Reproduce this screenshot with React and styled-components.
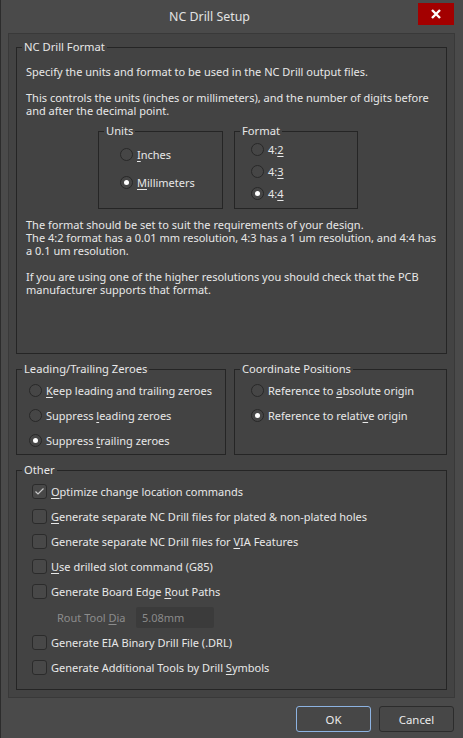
import React from 'react';
import styled, { createGlobalStyle } from 'styled-components';

const FONT = `"Noto Sans", "Open Sans", "DejaVu Sans", sans-serif`;

const GlobalStyle = createGlobalStyle`
  html, body {
    margin: 0;
    padding: 0;
    background: #4a4a4a;
  }
`;

const Window = styled.div`
  width: 463px;
  height: 738px;
  box-sizing: border-box;
  background: #4a4a4a;
  border-left: 1px solid #2c2c2c;
  display: flex;
  flex-direction: column;
  font-family: ${FONT};
  font-size: 11px;
  color: #e8e8e8;
`;

const TitleBar = styled.div`
  height: 33px;
  display: flex;
  align-items: flex-start;
`;

const Title = styled.div`
  flex: 1;
  text-align: center;
  line-height: 33px;
  font-size: 12.4px;
  color: #e2e2e2;
`;

const CloseButton = styled.div`
  width: 36px;
  height: 22px;
  margin: 3px 9px 0 0;
  background: #a30000;
  display: flex;
  align-items: center;
  justify-content: center;
`;

const Panel = styled.div`
  margin: 0 8px 0 7px;
  border: 1px solid #393939;
  background: #434343;
  padding: 6px 7px 7px;
  display: flex;
  flex-direction: column;
  gap: 8px;
`;

const Group = styled.fieldset`
  margin: 0;
  padding: 0;
  min-inline-size: 0;
  border: 1px solid #252525;
  width: ${({ $w }) => ($w ? `${$w}px` : 'auto')};
  flex: ${({ $w }) => ($w ? 'none' : '1')};
  box-sizing: border-box;
`;

const Legend = styled.legend`
  margin-left: 5px;
  padding: 0 2px;
  line-height: 14px;
  font-size: 11.2px;
`;

const GroupBody = styled.div`
  padding: ${({ $pad }) => $pad};
`;

const Para = styled.p`
  margin: 0 0 ${({ $gap }) => ($gap ? '13px' : '0')};
  line-height: 13px;
  white-space: nowrap;
`;

const BoxRow = styled.div`
  display: flex;
  gap: ${({ $gap }) => $gap}px;
  margin: ${({ $margin }) => $margin || '0'};
`;

const Option = styled.label`
  height: ${({ $h }) => $h}px;
  display: flex;
  align-items: center;
  gap: 4px;
  white-space: nowrap;
  color: ${({ $disabled }) => ($disabled ? '#8c8c8c' : '#e8e8e8')};
  padding-left: ${({ $indent }) => $indent || 0}px;
`;

const RadioDot = styled.span`
  width: 13px;
  height: 13px;
  box-sizing: border-box;
  border-radius: 50%;
  border: 1px solid #282828;
  background: #464646;
  display: flex;
  align-items: center;
  justify-content: center;
  flex: none;
  &::after {
    content: '';
    width: 5px;
    height: 5px;
    border-radius: 50%;
    background: #ffffff;
    display: ${({ $on }) => ($on ? 'block' : 'none')};
  }
`;

const CheckBox = styled.span`
  width: 15px;
  height: 15px;
  box-sizing: border-box;
  border-radius: 3px;
  border: 1px solid #2b2b2b;
  background: #484848;
  display: flex;
  align-items: center;
  justify-content: center;
  flex: none;
`;

const Key = styled.u`
  text-decoration-thickness: 1px;
  text-underline-offset: 2px;
`;

const ToolLabel = styled.span`
  width: 75px;
  flex: none;
`;

const ToolInput = styled.div`
  width: 78px;
  height: 21px;
  box-sizing: border-box;
  padding-left: 6px;
  border-radius: 2px;
  background: #3b3b3b;
  color: #8a8a8a;
  display: flex;
  align-items: center;
`;

const Footer = styled.div`
  display: flex;
  justify-content: flex-end;
  gap: 8px;
  margin-top: 8px;
  padding-right: 9px;
`;

const Button = styled.div`
  width: 75px;
  height: 26px;
  box-sizing: border-box;
  border-radius: 3px;
  border: 1px solid ${({ $primary }) => ($primary ? '#8db3e2' : '#2c2c2c')};
  background: #474747;
  display: flex;
  align-items: center;
  justify-content: center;
  font-size: 11.4px;
  color: #ececec;
`;

const Radio = ({ on, h, children }) => (
  <Option $h={h}>
    <RadioDot $on={on} />
    <span>{children}</span>
  </Option>
);

const Check = ({ on, children }) => (
  <Option $h={25}>
    <CheckBox>
      {on && (
        <svg width="11" height="9" viewBox="0 0 11 9">
          <polyline
            points="1.5,4.5 4,7 9.5,1.5"
            fill="none"
            stroke="#c9c9c9"
            strokeWidth="1.2"
          />
        </svg>
      )}
    </CheckBox>
    <span>{children}</span>
  </Option>
);

const App = () => {
  return (
    <>
      <GlobalStyle />
      <Window>
        <TitleBar>
          <Title>NC Drill Setup</Title>
          <CloseButton>
            <svg width="10" height="10" viewBox="0 0 10 10">
              <path d="M1 1 L9 9 M9 1 L1 9" stroke="#fff" strokeWidth="2.4" />
            </svg>
          </CloseButton>
        </TitleBar>

        <Panel>
          <Group>
            <Legend>NC Drill Format</Legend>
            <GroupBody $pad="11px 9px 57px">
              <Para $gap>
                Specify the units and format to be used in the NC Drill output files.
              </Para>
              <Para>
                This controls the units (inches or millimeters), and the number of digits before
                <br />
                and after the decimal point.
              </Para>
              <BoxRow $gap={11} $margin="7px 0 9px 72px">
                <Group $w={125}>
                  <Legend>Units</Legend>
                  <GroupBody $pad="2px 0 12px 21px">
                    <Radio h={28}>
                      <Key>I</Key>nches
                    </Radio>
                    <Radio h={28} on>
                      <Key>M</Key>illimeters
                    </Radio>
                  </GroupBody>
                </Group>
                <Group $w={124}>
                  <Legend>Format</Legend>
                  <GroupBody $pad="0 0 4px 16px">
                    <Radio h={22}>
                      4:<Key>2</Key>
                    </Radio>
                    <Radio h={22}>
                      4:<Key>3</Key>
                    </Radio>
                    <Radio h={22} on>
                      4:<Key>4</Key>
                    </Radio>
                  </GroupBody>
                </Group>
              </BoxRow>
              <Para>The format should be set to suit the requirements of your design.</Para>
              <Para $gap>
                The 4:2 format has a 0.01 mm resolution, 4:3 has a 1 um resolution, and 4:4 has
                <br />
                a 0.1 um resolution.
              </Para>
              <Para>
                If you are using one of the higher resolutions you should check that the PCB
                <br />
                manufacturer supports that format.
              </Para>
            </GroupBody>
          </Group>

          <BoxRow $gap={8}>
            <Group $w={210}>
              <Legend>Leading/Trailing Zeroes</Legend>
              <GroupBody $pad="2px 0 1px 12px">
                <Radio h={25}>
                  <Key>K</Key>eep leading and trailing zeroes
                </Radio>
                <Radio h={25}>
                  Suppress <Key>l</Key>eading zeroes
                </Radio>
                <Radio h={25} on>
                  Suppress <Key>t</Key>railing zeroes
                </Radio>
              </GroupBody>
            </Group>
            <Group>
              <Legend>Coordinate Positions</Legend>
              <GroupBody $pad="2px 0 1px 16px">
                <Radio h={25}>
                  Reference to <Key>a</Key>bsolute origin
                </Radio>
                <Radio h={25} on>
                  Reference to relati<Key>v</Key>e origin
                </Radio>
              </GroupBody>
            </Group>
          </BoxRow>

          <Group>
            <Legend>Other</Legend>
            <GroupBody $pad="2px 0 9px 15px">
              <Check on>
                <Key>O</Key>ptimize change location commands
              </Check>
              <Check>
                <Key>G</Key>enerate separate NC Drill files for plated &amp; non-plated holes
              </Check>
              <Check>
                Generate separate NC Drill files for <Key>V</Key>IA Features
              </Check>
              <Check>
                <Key>U</Key>se drilled slot command (G85)
              </Check>
              <Check>
                Generate Board Edge <Key>R</Key>out Paths
              </Check>
              <Option $h={26} $indent={25} $disabled>
                <ToolLabel>
                  Rout Tool <Key>D</Key>ia
                </ToolLabel>
                <ToolInput>5.08mm</ToolInput>
              </Option>
              <Check>Generate EIA Binary Drill File (.DRL)</Check>
              <Check>
                Generate Additional Tools by Drill <Key>S</Key>ymbols
              </Check>
            </GroupBody>
          </Group>
        </Panel>

        <Footer>
          <Button $primary>OK</Button>
          <Button>Cancel</Button>
        </Footer>
      </Window>
    </>
  );
};

export default App;
